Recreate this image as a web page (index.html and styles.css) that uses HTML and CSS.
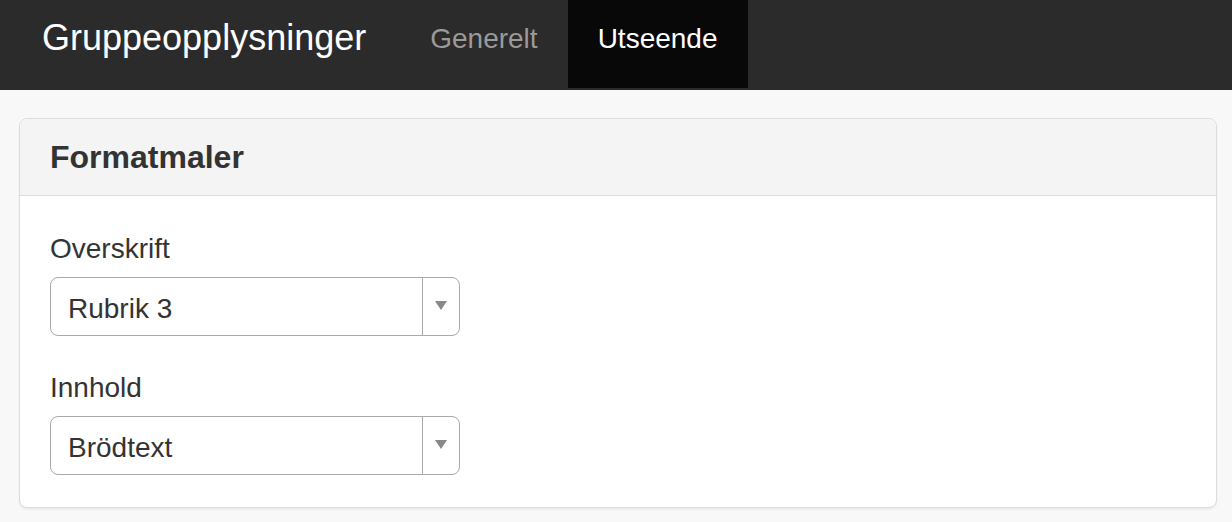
FILE: index.html
```html
<!DOCTYPE html>
<html lang="no">
<head>
<meta charset="utf-8">
<title>Gruppeopplysninger</title>
<link rel="stylesheet" href="styles.css">
</head>
<body>
<header class="navbar">
  <div class="brand">Gruppeopplysninger</div>
  <nav class="nav">
    <a class="nav-item">Generelt</a>
    <a class="nav-item active">Utseende</a>
  </nav>
</header>
<main class="page">
  <section class="panel">
    <div class="panel-heading"><h3 class="panel-title">Formatmaler</h3></div>
    <div class="panel-body">
      <div class="form-group">
        <label class="label">Overskrift</label>
        <div class="select">
          <span class="select-value">Rubrik 3</span>
          <span class="select-arrow"><span class="caret"></span></span>
        </div>
      </div>
      <div class="form-group">
        <label class="label">Innhold</label>
        <div class="select">
          <span class="select-value">Brödtext</span>
          <span class="select-arrow"><span class="caret"></span></span>
        </div>
      </div>
    </div>
  </section>
</main>
</body>
</html>
```
FILE: styles.css
```css
* { box-sizing: border-box; }
html, body {
  margin: 0;
  padding: 0;
  height: 100%;
}
body {
  font-family: "Liberation Sans", Arial, Helvetica, sans-serif;
  color: #333;
  background: #f8f8f8;
}
.navbar {
  display: flex;
  align-items: flex-start;
  height: 90px;
  background: #2b2b2b;
}
.brand {
  padding-left: 42px;
  margin-right: 34px;
  font-size: 36px;
  line-height: 75px;
  color: #fff;
}
.nav {
  display: flex;
}
.nav-item {
  display: block;
  height: 88px;
  padding: 0 30px;
  font-size: 28px;
  line-height: 77px;
  color: #9a9a9a;
  text-decoration: none;
}
.nav-item.active {
  background: #080808;
  color: #fff;
}
.page {
  padding: 28px 15px 14px 19px;
}
.panel {
  background: #fff;
  border: 1px solid #dcdcdc;
  border-radius: 8px;
  box-shadow: 0 2px 2px rgba(0, 0, 0, 0.05);
}
.panel-heading {
  background: #f4f4f4;
  border-bottom: 1px solid #dcdcdc;
  border-radius: 7px 7px 0 0;
  padding: 21px 30px 20px;
}
.panel-title {
  margin: 0;
  font-size: 32px;
  line-height: 35px;
  font-weight: bold;
  color: #333;
}
.panel-body {
  padding: 33px 30px 32px;
}
.form-group {
  margin-bottom: 32px;
}
.form-group:last-child {
  margin-bottom: 0;
}
.label {
  display: block;
  font-size: 28px;
  line-height: 40px;
  margin-bottom: 8px;
  color: #333;
}
.select {
  display: flex;
  width: 410px;
  height: 59px;
  border: 1px solid #a9a9a9;
  border-radius: 8px;
  background: #fff;
}
.select-value {
  flex: 1;
  padding: 11px 17px 0;
  font-size: 28px;
  line-height: 40px;
  color: #333;
}
.select-arrow {
  display: flex;
  justify-content: center;
  width: 37px;
  padding-top: 23px;
  border-left: 1px solid #a9a9a9;
}
.caret {
  width: 0;
  height: 0;
  border-left: 6px solid transparent;
  border-right: 6px solid transparent;
  border-top: 9px solid #888;
}
```
